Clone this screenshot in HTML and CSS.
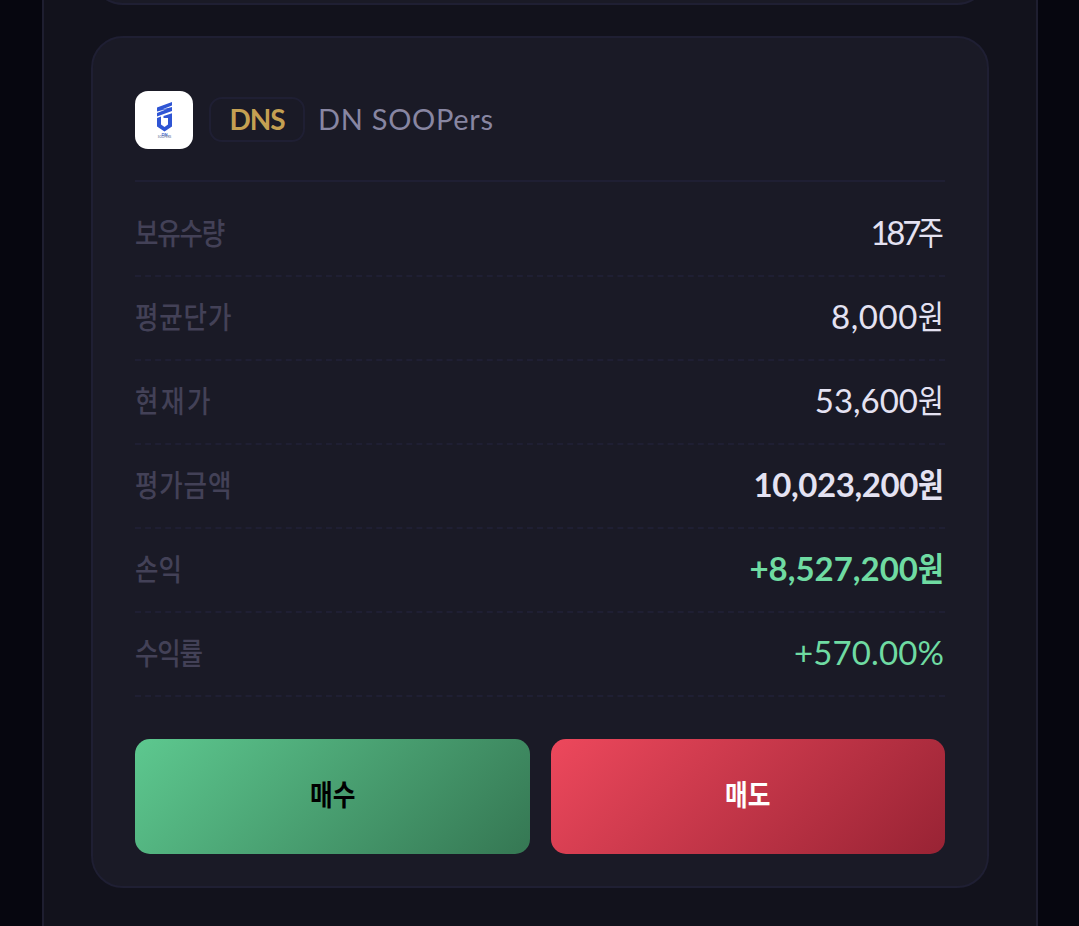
FILE: index.html
```html
<!DOCTYPE html>
<html lang="ko">
  <head>
    <meta charset="UTF-8" />
    <meta name="viewport" content="width=device-width, initial-scale=1.0" />
    <title>DN SOOPers</title>
    <link rel="stylesheet" href="styles.css">
  </head>
  <body>
    <main class="panel">
      <div class="card card-prev"></div>

      <section class="card">
        <header class="card-header">
          <div class="logo">
            <svg width="58" height="58" viewBox="0 0 58 58">
              <g fill="#2f55d4">
                <path d="M22 16.500 L37 11 V14.500 L27 18.500 L37 16 V20 L22 25.500 V22 L32 18 L22 20.500Z" />
                <path d="M22 27 L26 25.500 V33.500 L29.500 36 L33 33.500 V27 H28.500 V25 L37 22.300 V35.500 L29.500 40.500 L22 35.500Z" />
              </g>
              <text class="logo-name" x="29.500" y="44.500" text-anchor="middle">DN</text>
              <text class="logo-sub" x="29.500" y="46.500" text-anchor="middle">SOOPERS</text>
            </svg>
          </div>
          <span class="ticker"><span class="ticker-text">DNS</span></span>
          <span class="name">DN SOOPers</span>
        </header>

        <div class="row"><span class="label label-tight">보유수량</span><span class="value v-qty">187<span class="unit">주</span></span></div>
        <div class="row"><span class="label label-wide">평균단가</span><span class="value v-avg">8,000<span class="unit">원</span></span></div>
        <div class="row"><span class="label label-wider">현재가</span><span class="value">53,600<span class="unit">원</span></span></div>
        <div class="row"><span class="label label-wide">평가금액</span><span class="value v-total bold">10,023,200<span class="unit">원</span></span></div>
        <div class="row"><span class="label">손익</span><span class="value bold up">+8,527,200<span class="unit">원</span></span></div>
        <div class="row"><span class="label label-tight">수익률</span><span class="value v-rate up">+570.00%</span></div>

        <div class="actions">
          <button class="btn btn-buy"><span class="btn-text">매수</span></button>
          <button class="btn btn-sell"><span class="btn-text">매도</span></button>
        </div>
      </section>
    </main>
  </body>
</html>
```
FILE: styles.css
```css
* {
  box-sizing: border-box;
}

body {
  margin: 0;
  height: 926px;
  overflow: hidden;
  background-color: #06060f;
  font-family: Lato, "Noto Sans CJK KR", sans-serif;
}

.panel {
  display: flex;
  flex-direction: column;
  width: 996px;
  height: 926px;
  margin-left: 42px;
  padding: 0 47px;
  background-color: #12121c;
  border-left: 2px solid #1e1e30;
  border-right: 2px solid #1e1e30;
}

.card {
  flex-shrink: 0;
  height: 852px;
  padding: 53px 42px 32px;
  background-color: #1a1a26;
  border: 2px solid #1f1f33;
  border-radius: 32px;
}

.card-prev {
  height: 65px;
  margin-top: -60px;
  margin-bottom: 31px;
  padding: 0;
}

.card-header {
  display: flex;
  align-items: center;
  height: 91px;
  padding-bottom: 31px;
  border-bottom: 2px solid #1f1f33;
  margin-bottom: 11px;
}

.logo {
  width: 58px;
  height: 58px;
  background-color: #fff;
  border-radius: 13px;
  overflow: hidden;
}

.logo svg {
  display: block;
}

.logo-name {
  font-size: 4px;
  font-weight: bold;
  fill: #3a5cc8;
}

.logo-sub {
  font-size: 3px;
  fill: #4a5a90;
}

.ticker {
  display: flex;
  align-items: center;
  justify-content: center;
  width: 96px;
  height: 45px;
  margin: 0 13px 2px 16px;
  border: 2px solid #1f1f33;
  border-radius: 13px;
}

.ticker-text {
  font-size: 28px;
  line-height: 28px;
  font-weight: bold;
  letter-spacing: -1px;
  color: #c4a052;
}

.name {
  padding-bottom: 2px;
  font-size: 29px;
  line-height: 40px;
  letter-spacing: 0.7px;
  color: #8886a2;
}

.row {
  display: flex;
  align-items: center;
  justify-content: space-between;
  height: 84px;
  padding-bottom: 4px;
  border-bottom: 2px dashed #1f1f33;
}

.label {
  font-size: 30px;
  font-weight: 500;
  line-height: 40px;
  color: #434157;
  transform: scaleX(0.85);
  transform-origin: left;
}

.label-tight {
  letter-spacing: -1.4px;
}

.label-wide {
  letter-spacing: 1px;
}

.label-wider {
  letter-spacing: 3px;
}

.value {
  font-size: 33px;
  line-height: 40px;
  color: #e4e2f2;
  white-space: nowrap;
}

.v-qty {
  letter-spacing: -3.3px;
}

.v-avg {
  letter-spacing: 0.6px;
}

.v-total {
  letter-spacing: -0.4px;
}

.v-rate {
  margin-right: 1px;
  letter-spacing: 0.1px;
}

.bold {
  font-weight: bold;
}

.up {
  color: #6fdba2;
}

.unit {
  display: inline-block;
  width: 27px;
  letter-spacing: 0;
  transform: scaleX(0.85);
  transform-origin: left;
}

.actions {
  display: flex;
  gap: 21px;
  margin-top: 42px;
}

.btn {
  flex: 1;
  height: 115px;
  padding: 0 0 7px;
  border: none;
  border-radius: 15px;
  font-family: inherit;
  font-size: 29px;
  font-weight: bold;
  cursor: pointer;
}

.btn-text {
  display: inline-block;
  transform: scaleX(0.85);
}

.btn-buy {
  background: linear-gradient(135deg, #5dc88f, #357753);
  color: #000;
}

.btn-sell {
  background: linear-gradient(135deg, #ed485c, #982334);
  color: #fff;
}
```
